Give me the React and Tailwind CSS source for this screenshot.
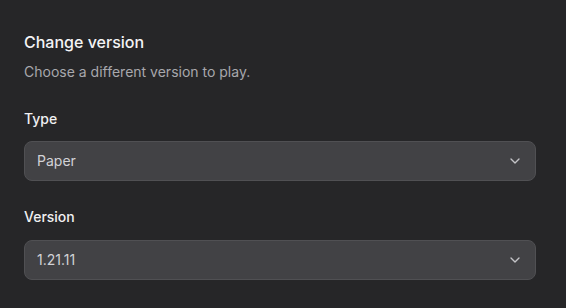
import React from "react";

function Chevron() {
  return (
    <svg width="16" height="16" viewBox="0 0 24 24" fill="none" stroke="currentColor" strokeWidth="2" strokeLinecap="round" strokeLinejoin="round" className="text-[#c4c4c8]">
      <path d="m6 9 6 6 6-6" />
    </svg>
  );
}

function Select({ value }) {
  return (
    <div className="flex h-10 items-center justify-between rounded-lg border border-[#505053] bg-[#424245] pl-3 pr-3 text-sm text-[#d2d2d6]">
      <span>{value}</span>
      <Chevron />
    </div>
  );
}

export default function App() {
  return (
    <div className="h-[308px] w-[566px] bg-[#262628] pl-6 pr-[30px] pt-[30px]" style={{ fontFamily: "Inter, 'Noto Sans', sans-serif" }}>
      <h2 className="text-base font-medium leading-6 text-[#f4f4f5]">Change version</h2>
      <p className="mt-2 text-sm leading-5 text-[#a8a8ad]">Choose a different version to play.</p>
      <div className="mt-[27px]">
        <div className="text-sm font-medium leading-5 text-[#f0f0f2]">Type</div>
        <div className="mt-3">
          <Select value="Paper" />
        </div>
      </div>
      <div className="mt-[26px]">
        <div className="text-sm font-medium leading-5 text-[#f0f0f2]">Version</div>
        <div className="mt-[13px]">
          <Select value="1.21.11" />
        </div>
      </div>
    </div>
  );
}
